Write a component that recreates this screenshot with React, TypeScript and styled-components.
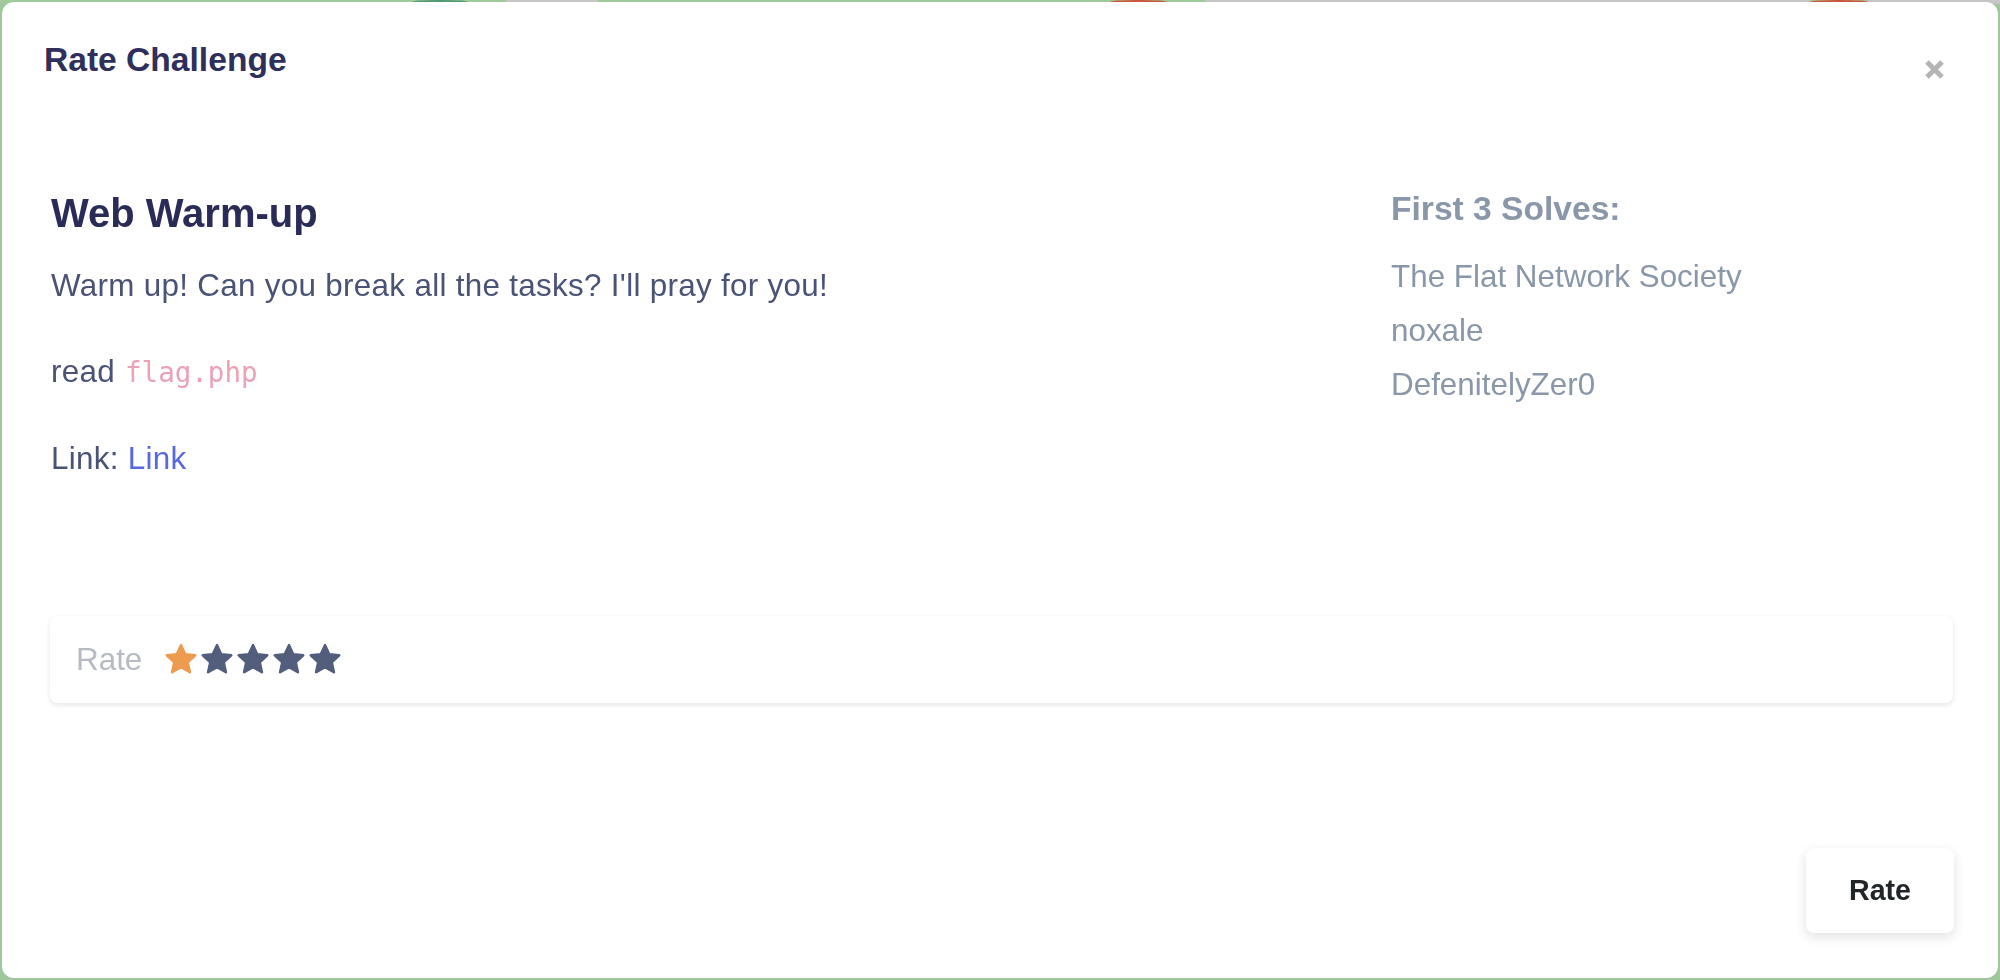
import React from "react";
import styled, { createGlobalStyle } from "styled-components";

const Global = createGlobalStyle`
  html, body { margin: 0; padding: 0; }
  body {
    font-family: "Liberation Sans", Arial, Helvetica, sans-serif;
    background: #9fc79b;
    overflow: hidden;
  }
`;

const Page = styled.div`
  width: 2000px;
  height: 980px;
  background: #9fc79b;
`;

const Strip = styled.div`
  display: flex;
  height: 4px;
`;

const Segment = styled.div<{ $w: number; $c: string; $round?: boolean }>`
  width: ${(p) => p.$w}px;
  flex: none;
  background: ${(p) => p.$c};
  border-radius: ${(p) => (p.$round ? "50% 50% 0 0" : "0")};
`;

const Modal = styled.div`
  position: fixed;
  top: 2px;
  left: 2px;
  right: 2px;
  bottom: 2px;
  background: #ffffff;
  border-radius: 12px;
  display: flex;
  flex-direction: column;
`;

const Header = styled.div`
  display: flex;
  justify-content: space-between;
  align-items: flex-start;
  padding: 33px 42px 0 42px;
`;

const ModalTitle = styled.h5`
  margin: 0;
  font-size: 33.6px;
  line-height: 50.4px;
  font-weight: 700;
  color: #2e2f5b;
`;

const Close = styled.button`
  margin: 24px 11px 0 0;
  padding: 0;
  border: 0;
  background: transparent;
  width: 21px;
  height: 21px;
  display: flex;
  cursor: pointer;
`;

const Body = styled.div`
  padding: 104px 45px 0 48px;
  display: flex;
  flex-direction: column;
`;

const Columns = styled.div`
  display: grid;
  grid-template-columns: 1341px 1fr;
`;

const Col = styled.div`
  display: flex;
  flex-direction: column;
`;

const ChallengeName = styled.h3`
  margin: 0 0 24.6px 1px;
  font-size: 40px;
  line-height: 48px;
  font-weight: 700;
  color: #2a2c57;
`;

const Para = styled.p<{ $last?: boolean }>`
  margin: 0 0 ${(p) => (p.$last ? 0 : 39)}px 1px;
  font-size: 31.4px;
  line-height: 47.1px;
  letter-spacing: 0.3px;
  color: #4a5275;
`;

const Code = styled.code`
  font-family: "DejaVu Sans Mono", "Liberation Mono", monospace;
  font-size: 27.5px;
  letter-spacing: 0;
  color: #eca2b5;
  margin-left: 1px;
`;

const Anchor = styled.a`
  color: #5868e0;
  text-decoration: none;
`;

const SolvesTitle = styled.h5`
  margin: 0 0 19.8px 0;
  font-size: 33.6px;
  line-height: 40.3px;
  font-weight: 700;
  color: #8997a9;
`;

const Solver = styled.div`
  font-size: 31.4px;
  line-height: 54px;
  color: #8997a9;
`;

const RateCard = styled.div`
  margin-top: 134px;
  height: 87px;
  border-radius: 7px;
  background: #ffffff;
  box-shadow: 0 2px 5px rgba(0, 0, 0, 0.1), 0 0 1px rgba(0, 0, 0, 0.06);
  display: flex;
  align-items: center;
  padding: 0 26px;
`;

const RateLabel = styled.span`
  font-size: 31.4px;
  line-height: 47.1px;
  color: #b6bac3;
  margin-right: 22px;
`;

const Stars = styled.div`
  display: flex;
  gap: 2px;
`;

const Footer = styled.div`
  display: flex;
  justify-content: flex-end;
  padding: 145px 44px 0 0;
`;

const RateButton = styled.button`
  width: 148px;
  height: 85px;
  border: 0;
  border-radius: 8px;
  background: #ffffff;
  box-shadow: 0 4px 12px rgba(0, 0, 0, 0.12), 0 0 1px rgba(0, 0, 0, 0.05);
  font-family: "Liberation Sans", Arial, sans-serif;
  font-size: 28.6px;
  font-weight: 700;
  color: #212529;
  cursor: pointer;
`;

const Star = ({ color }: { color: string }) => (
  <svg width="34" height="33" viewBox="0 0 34 33">
    <path
      d="M17 2.2 L21.2 11.4 L31.2 12.4 L23.7 19.2 L25.9 29.2 L17 24.1 L8.1 29.2 L10.3 19.2 L2.8 12.4 L12.8 11.4 Z"
      fill={color}
      stroke={color}
      strokeWidth="2.6"
      strokeLinejoin="round"
    />
  </svg>
);

const strip = [
  { w: 412, c: "#a0c99c" },
  { w: 56, c: "#4f9a72", r: true },
  { w: 38, c: "#a0c99c" },
  { w: 92, c: "#c5c5c5" },
  { w: 512, c: "#a0c99c" },
  { w: 57, c: "#c9553b", r: true },
  { w: 38, c: "#a0c99c" },
  { w: 605, c: "#c5c5c5" },
  { w: 58, c: "#c9553b", r: true },
  { w: 132, c: "#c5c5c5" },
];

export default function App() {
  return (
    <>
      <Global />
      <Page>
        <Strip>
          {strip.map((s, i) => (
            <Segment key={i} $w={s.w} $c={s.c} $round={s.r} />
          ))}
        </Strip>
      </Page>
      <Modal>
        <Header>
          <ModalTitle>Rate Challenge</ModalTitle>
          <Close aria-label="Close">
            <svg width="21" height="21" viewBox="0 0 21 21">
              <path d="M3 3 L18 18 M18 3 L3 18" stroke="#b4b4b4" strokeWidth="5" />
            </svg>
          </Close>
        </Header>
        <Body>
          <Columns>
            <Col>
              <ChallengeName>Web Warm-up</ChallengeName>
              <Para>Warm up! Can you break all the tasks? I'll pray for you!</Para>
              <Para>
                read <Code>flag.php</Code>
              </Para>
              <Para $last>
                Link: <Anchor href="#">Link</Anchor>
              </Para>
            </Col>
            <Col>
              <SolvesTitle>First 3 Solves:</SolvesTitle>
              <Solver>The Flat Network Society</Solver>
              <Solver>noxale</Solver>
              <Solver>DefenitelyZer0</Solver>
            </Col>
          </Columns>
          <RateCard>
            <RateLabel>Rate</RateLabel>
            <Stars>
              <Star color="#ec9b4f" />
              <Star color="#535d7c" />
              <Star color="#535d7c" />
              <Star color="#535d7c" />
              <Star color="#535d7c" />
            </Stars>
          </RateCard>
        </Body>
        <Footer>
          <RateButton>Rate</RateButton>
        </Footer>
      </Modal>
    </>
  );
}
